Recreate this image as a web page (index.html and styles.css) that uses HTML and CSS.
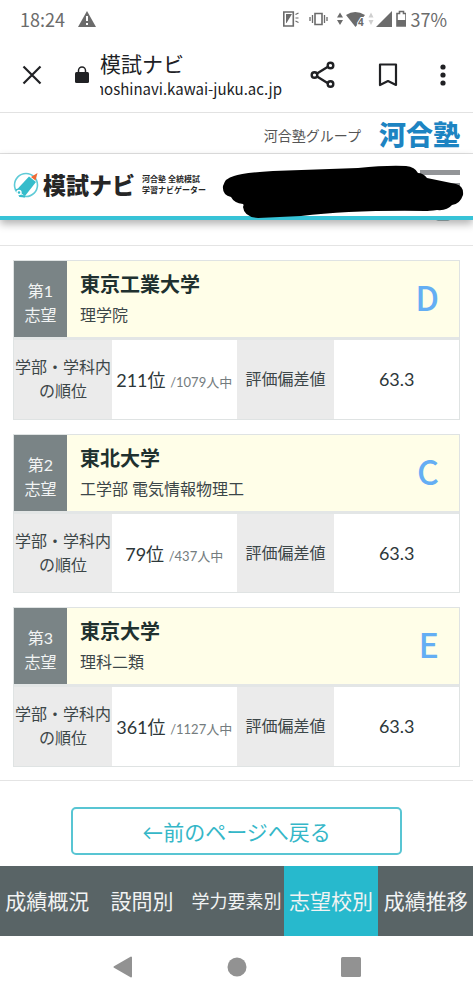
FILE: index.html
```html
<!DOCTYPE html>
<html lang="ja">
<head>
<meta charset="utf-8">
<meta name="viewport" content="width=device-width, initial-scale=1">
<title>模試ナビ</title>
<link rel="stylesheet" href="styles.css">
</head>
<body>
<div class="status">
  <span>18:24</span>
  <svg class="warn" width="18" height="16" viewBox="0 0 18 16"><path d="M9 0 18 16H0Z" fill="#6b6b6b"/><path d="M9 5v5M9 12v2" stroke="#fff" stroke-width="2"/></svg>
  <svg width="124" height="18" viewBox="0 0 124 18" fill="#6b6b6b">
    <path d="M1.800 2h9.500v14H1.800z" fill="none" stroke="#6b6b6b" stroke-width="1.600"/>
    <path d="M4 4h6L4.500 13H4z"/>
    <path d="M13.500 4.500l3-1.500M13.500 8h3M13.500 11l3 1.500" stroke="#6b6b6b" stroke-width="1.200"/>
    <path d="M33 3.500h7v11h-7z" fill="none" stroke="#6b6b6b" stroke-width="1.600"/>
    <path d="M30.500 5v8M28 7v4M42.500 5v8M45 7v4" stroke="#6b6b6b" stroke-width="1.300"/>
    <path d="M55 7.500l3-5 3 5zM55 10h6l-3 5z"/>
    <path d="M64 5Q73-1 83 5L73.500 17z"/>
    <text class="wifi-num" x="76" y="16">4</text>
    <path d="M86.500 7.500l2.500-5 2.500 5zM86.500 10h5l-2.500 5z" fill="#cfcfcf"/>
    <path d="M94 17 110 1v16z"/>
    <path d="M115 3.500h2.500V1.500h4v2h2.500V16h-9z" fill="none" stroke="#6b6b6b" stroke-width="1.600"/><path d="M115 10h9v6h-9z"/>
  </svg>
  <span>37%</span>
</div>

<div class="toolbar">
  <button class="tool" aria-label="閉じる"><svg width="20" height="20" viewBox="0 0 20 20"><path d="M1.500 1.500 18.500 18.500M18.500 1.500 1.500 18.500" stroke="#202124" stroke-width="2.200"/></svg></button>
  <svg class="lock" width="14" height="18" viewBox="0 0 14 18"><rect y="6" width="14" height="11" rx="1.500" fill="#202124"/><path d="M3.500 7V4.500a3.500 3.500 0 0 1 7 0V7" fill="none" stroke="#202124" stroke-width="1.500"/></svg>
  <div class="site">
    <div class="site-title">模試ナビ</div>
    <div class="site-url"><span>moshinavi.kawai-juku.ac.jp</span></div>
  </div>
  <div class="actions">
    <button class="tool" aria-label="共有"><svg width="26" height="28" viewBox="0 0 26 28" fill="none" stroke="#202124" stroke-width="2.400"><path d="M7 12.500 17.500 6M7 15.500 17.500 22"/><circle cx="4.500" cy="14" r="2.800"/><circle cx="20.500" cy="4.500" r="2.800"/><circle cx="20.500" cy="23" r="2.800"/></svg></button>
    <button class="tool" aria-label="ブックマーク"><svg width="20" height="24" viewBox="0 0 20 24"><path d="M2 1.500h16v20.500l-8-4-8 4z" fill="none" stroke="#202124" stroke-width="2.200" stroke-linejoin="round"/></svg></button>
    <button class="tool" aria-label="メニュー"><svg width="6" height="22" viewBox="0 0 6 22" fill="#202124"><circle cx="3" cy="3" r="2.600"/><circle cx="3" cy="11" r="2.600"/><circle cx="3" cy="19" r="2.600"/></svg></button>
  </div>
</div>

<div class="group"><span>河合塾グループ</span><a class="brand" href="#">河合塾</a></div>

<header class="header">
  <svg width="26" height="26" viewBox="0 0 26 26">
    <circle cx="13" cy="13" r="11.500" fill="none" stroke="#5fcbd7" stroke-width="1.600"/>
    <path d="M16 4.500 23 10 12 24 3.500 18z" fill="#35bccb"/>
    <path d="M3.500 17 7 24l5 .5" fill="none" stroke="#35bccb" stroke-width="2"/>
    <circle cx="6" cy="20.500" r="2" fill="#35bccb" stroke="#fff" stroke-width="1.400"/>
    <path d="M18 0h8v8z" fill="#fff"/><path d="M24.500 1 18 5l4.500 3.500z" fill="#ee6a35"/>
  </svg>
  <h1>模試ナビ</h1>
  <p class="tagline">河合塾 全統模試<br>学習ナビゲーター</p>
  <button class="menu" aria-label="メニュー"><i></i><i></i><i></i></button>
  <svg class="scribble" width="244" height="58" viewBox="0 0 244 58">
    <path d="M214 57h14l-3 1.500h-8z" fill="#7d8c8e"/>
    <path d="M0 53h244v4H0z" fill="#37c3d7"/>
    <path d="M12 13Q20 10 51 8L136 5Q165 2 184 3Q193 4 196 10Q201 10 205 15L234 21Q242 23 241 32Q238 41 230 42Q225 48 215 47Q207 48 203 48Q130 47 79 53L36 55Q22 54 21 44Q22 42 21 41Q12 40 9 34Q0 32 1 23Q3 15 12 13Z" fill="#000"/>
  </svg>
</header>

<main>
  <section class="choice">
    <div class="choice-head"><div class="rank">第1<br>志望</div><div class="school"><h2>東京工業大学</h2><p>理学院</p></div><strong class="grade">D</strong></div>
    <table><tr><th scope="row">学部・学科内の順位</th><td>211位 <small>/1079人中</small></td><th scope="row">評価偏差値</th><td>63.3</td></tr></table>
  </section>
  <section class="choice">
    <div class="choice-head"><div class="rank">第2<br>志望</div><div class="school"><h2>東北大学</h2><p>工学部 電気情報物理工</p></div><strong class="grade">C</strong></div>
    <table><tr><th scope="row">学部・学科内の順位</th><td>79位 <small>/437人中</small></td><th scope="row">評価偏差値</th><td>63.3</td></tr></table>
  </section>
  <section class="choice">
    <div class="choice-head"><div class="rank">第3<br>志望</div><div class="school"><h2>東京大学</h2><p>理科二類</p></div><strong class="grade">E</strong></div>
    <table><tr><th scope="row">学部・学科内の順位</th><td>361位 <small>/1127人中</small></td><th scope="row">評価偏差値</th><td>63.3</td></tr></table>
  </section>
</main>

<div class="back"><button>←前のページへ戻る</button></div>

<nav class="tabs">
  <a href="#">成績概況</a><a href="#">設問別</a><a href="#" class="small">学力要素別</a><a href="#" class="active" aria-current="page">志望校別</a><a href="#">成績推移</a>
</nav>

<div class="sysnav">
  <button aria-label="戻る"><svg width="20" height="22" viewBox="0 0 20 22"><path d="M1.500 11 18 1.500v19z" fill="#929292" stroke="#929292" stroke-width="2" stroke-linejoin="round"/></svg></button>
  <button aria-label="ホーム"><svg width="20" height="20" viewBox="0 0 20 20"><circle cx="10" cy="10" r="9.500" fill="#929292"/></svg></button>
  <button aria-label="履歴"><svg width="20" height="20" viewBox="0 0 20 20"><rect width="20" height="20" rx="1.500" fill="#929292"/></svg></button>
</div>
</body>
</html>
```
FILE: styles.css
```css
* { box-sizing: border-box; }
body {
  margin: 0;
  background: #fff;
  color: #3c4648;
  font-family: Lato, "Noto Sans CJK JP", sans-serif;
}
h1, h2, p { margin: 0; }
button { border: 0; padding: 0; background: none; font: inherit; color: inherit; }
a { color: inherit; text-decoration: none; }
svg { display: block; flex: none; }

.status {
  display: flex;
  align-items: center;
  height: 38px;
  padding: 0 26px 0 20px;
  color: #6b6b6b;
  font: 18px/38px "Noto Sans CJK JP", sans-serif;
}
.warn { margin: 0 auto 0 13px; }
.status span:last-child { margin-left: 4px; }
.wifi-num { font: bold 10px "Noto Sans", sans-serif; fill: #6b6b6b; stroke: #fff; stroke-width: 2px; paint-order: stroke; }

.toolbar {
  display: flex;
  align-items: center;
  height: 75px;
  padding: 0 27px 0 22px;
  border-bottom: 1px solid #e2e2e2;
  color: #202124;
  font-family: "Noto Sans CJK JP", sans-serif;
}
.lock { margin: 0 11px 0 33px; }
.site { flex: 1; min-width: 0; margin-right: 28px; }
.site-title { font-size: 21px; line-height: 28px; }
.site-url { display: flex; justify-content: flex-end; overflow: hidden; font-size: 15px; line-height: 24px; white-space: nowrap; }
.actions { display: flex; align-items: center; gap: 42px; }

.group {
  display: flex;
  align-items: center;
  justify-content: flex-end;
  gap: 18px;
  height: 41px;
  padding: 4px 13px 0 0;
  border-bottom: 1px solid #e2e2e2;
  font-size: 14px;
  color: #555;
}
.brand { color: #1d84c2; font-size: 27px; line-height: 32px; font-weight: 900; }

.header {
  position: relative;
  display: flex;
  align-items: center;
  height: 66px;
  padding: 0 13px;
  border-bottom: 4px solid #37c3d7;
  box-shadow: 0 4px 8px rgba(0, 0, 0, .3);
}
.header h1 { margin: 0 7px 0 4px; color: #262626; font-size: 23px; font-weight: 900; line-height: 32px; white-space: nowrap; }
.tagline { color: #262626; font-size: 8px; font-weight: 700; line-height: 11px; white-space: nowrap; }
.menu { display: grid; gap: 8px; margin-left: auto; }
.menu i { width: 40px; height: 5px; background: #939598; }
.scribble { position: absolute; right: 7px; top: 9px; }

main {
  display: grid;
  gap: 14px;
  margin-top: 25px;
  padding: 14px 13px 13px;
  border: solid #e4e4e4;
  border-width: 1px 0;
}
.choice { border: 1px solid #dfe3e3; }
.choice-head { display: flex; height: 76px; background: #fffee8; }
.rank {
  flex: none;
  width: 53px;
  padding-top: 18px;
  background: #7a8486;
  color: #f2f4f4;
  font-size: 16px;
  line-height: 24px;
  text-align: center;
}
.school { flex: 1; padding: 8px 0 0 13px; }
.school h2 { color: #20302f; font-size: 20px; line-height: 30px; font-weight: 700; }
.school p { font-size: 16px; line-height: 32px; }
.grade { padding-right: 20px; color: #64aef4; font-family: "Noto Sans CJK JP", sans-serif; font-size: 34px; line-height: 72px; font-weight: 500; }
table { width: 100%; table-layout: fixed; border-collapse: collapse; border-top: 3px solid #e3e6e6; }
th, td { height: 80px; padding: 0; text-align: center; font-weight: 400; }
th { width: 22%; background: #ebebeb; font-size: 16px; line-height: 24px; }
td { font-size: 18px; white-space: nowrap; color: #2d3739; }
small { font-size: 13px; color: #747c7e; }

.back { padding: 26px 71px 11px; }
.back button {
  width: 100%;
  height: 48px;
  border: 2px solid #58c5d3;
  border-radius: 5px;
  color: #35b7c8;
  font-size: 21px;
}

.tabs { display: flex; height: 70px; background: #596466; color: #f1f3f3; font-size: 21px; line-height: 70px; }
.tabs a { flex: 1 1 0; min-width: 0; text-align: center; white-space: nowrap; }
.tabs .small { font-size: 18px; }
.tabs .active { background: #27b9cd; }

.sysnav { display: flex; justify-content: center; align-items: center; gap: 94px; height: 63px; }
```
